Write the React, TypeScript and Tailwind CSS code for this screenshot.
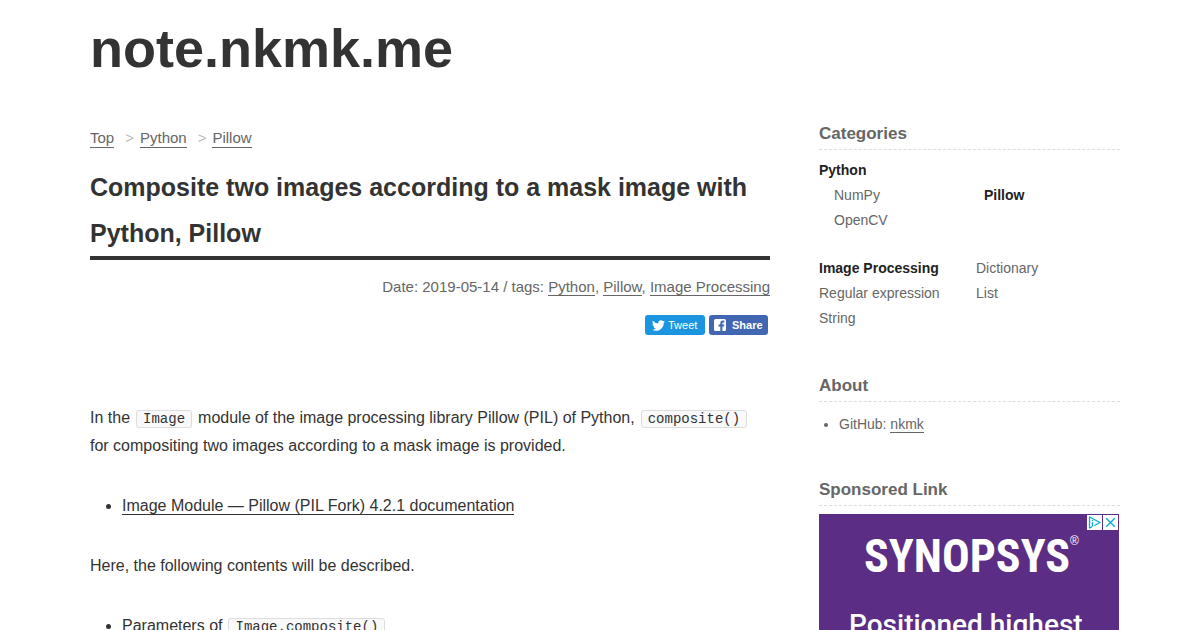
import React from "react";

const link = "border-b border-current";
const code =
  "mx-[6px] rounded-[3px] border border-[#dddddd] bg-[#f9f9f9] px-[6px] font-['Liberation_Mono',monospace] text-[14px] leading-[20px]";

const SideHeading = ({ children }: { children: React.ReactNode }) => (
  <h2 className="border-b border-dashed border-[#dddddd] pt-px pb-[3px] text-[17px] leading-[24px] font-bold">
    {children}
  </h2>
);

const Share = () => (
  <div className="mt-[14px] flex justify-end gap-1 pr-[2px] text-[11px] leading-[20px] text-white">
    <button type="button" className="flex h-5 w-[60px] items-center gap-[3px] rounded-[3px] bg-[#1b95e0] pl-[7px]">
      <svg width="13" height="13" viewBox="0 0 24 24" fill="currentColor" aria-hidden="true">
        <path d="M23.95 4.57a10 10 0 0 1-2.82.77 4.96 4.96 0 0 0 2.16-2.72 9.9 9.9 0 0 1-3.12 1.19 4.92 4.92 0 0 0-8.39 4.48A13.93 13.93 0 0 1 1.64 3.16a4.92 4.92 0 0 0 1.52 6.57 4.9 4.9 0 0 1-2.23-.61v.06a4.92 4.92 0 0 0 3.95 4.83 5 5 0 0 1-2.21.08 4.94 4.94 0 0 0 4.6 3.42A9.87 9.87 0 0 1 0 19.54a13.99 13.99 0 0 0 7.55 2.21c9.05 0 14-7.5 14-13.98 0-.21 0-.42-.02-.63a9.94 9.94 0 0 0 2.42-2.57z" />
      </svg>
      Tweet
    </button>
    <button type="button" className="flex h-5 w-[59px] items-center gap-[6px] rounded-[3px] bg-[#4267b2] pl-[5px] font-bold">
      <svg width="12" height="12" viewBox="0 0 16 16" aria-hidden="true">
        <rect width="16" height="16" rx="2" fill="#fff" />
        <path d="M11.2 16V10h2.2l.4-2.7h-2.6V5.9c0-.8.3-1.2 1.2-1.2h1.4V2.2c-.3 0-1.1-.1-2-.1-2 0-3.4 1.2-3.4 3.4v1.8H6V10h2.4v6z" fill="#4267b2" />
      </svg>
      Share
    </button>
  </div>
);

const Ad = () => (
  <div className="relative mt-2 h-[250px] w-[300px] bg-[#5c2d84] text-white">
    <div className="absolute top-px right-px flex gap-px">
      <a href="#" aria-label="Ad choices" className="bg-white">
        <svg width="15" height="15" viewBox="0 0 15 15" fill="none" stroke="#00aecd">
          <path d="M5 11.8 2.5 13V2l10.5 5.5-5.5 3" strokeWidth="1.3" strokeLinejoin="round" />
          <path d="M5.5 5v1M5.5 7v4.5" strokeWidth="1.3" />
        </svg>
      </a>
      <button type="button" aria-label="Close ad" className="bg-white">
        <svg width="15" height="15" viewBox="0 0 15 15" stroke="#00aecd" strokeWidth="1.3">
          <path d="m3.2 3.2 8.6 8.6M11.8 3.2l-8.6 8.6" />
        </svg>
      </button>
    </div>
    <svg width="300" height="80" viewBox="0 0 300 80" fill="currentColor" aria-label="Synopsys">
      <text x="45" y="58" fontSize="46" fontWeight="700" fontFamily="'Liberation Sans Narrow','Roboto Condensed','Liberation Sans',sans-serif">
        SYNOPSYS
      </text>
      <text x="251" y="31" fontSize="12" fontFamily="'Liberation Sans',sans-serif">®</text>
    </svg>
    <p className="pt-[14px] pl-[30px] font-['Roboto',sans-serif] text-[28px] leading-[34px] font-medium">
      Positioned highest
    </p>
  </div>
);

export default function App() {
  return (
    <div className="h-screen overflow-hidden bg-white pr-20 pl-[90px] font-['Liberation_Sans',Arial,sans-serif] text-[16px] leading-[28px] text-[#333333]">
      <header className="pt-[13px]">
        <h1 className="text-[54px] leading-[70px] font-bold">
          <a href="#">note.nkmk.me</a>
        </h1>
      </header>

      <div className="flex gap-[49px] pt-[38px]">
        <main className="min-w-0 flex-1">
          <nav className="mt-[3px] flex text-[15px] text-[#666666]">
            <a href="#" className="h-6 border-b border-current">Top</a>
            <span className="pr-[6px] pl-[11px] text-[#bbbbbb]">&gt;</span>
            <a href="#" className="h-6 border-b border-current">Python</a>
            <span className="pr-[6px] pl-[11px] text-[#bbbbbb]">&gt;</span>
            <a href="#" className="h-6 border-b border-current">Pillow</a>
          </nav>

          <h1 className="mt-3 border-b-4 border-[#333333] text-[25px] leading-[46px] font-bold">
            Composite two images according to a mask image with Python, Pillow
          </h1>

          <p className="mt-[13px] text-right text-[15px] text-[#666666]">
            Date: 2019-05-14 / tags: <a href="#" className={link}>Python</a>,{" "}
            <a href="#" className={link}>Pillow</a>,{" "}
            <a href="#" className={link}>Image Processing</a>
          </p>

          <Share />

          <p className="mt-[69px]">
            In the<code className={code}>Image</code>module of the image processing library Pillow (PIL) of Python,
            <code className={code}>composite()</code> for compositing two images according to a mask image is provided.
          </p>
          <ul className="mt-8 list-disc pl-8">
            <li>
              <a href="#" className={link}>Image Module — Pillow (PIL Fork) 4.2.1 documentation</a>
            </li>
          </ul>
          <p className="mt-8">Here, the following contents will be described.</p>
          <ul className="mt-8 list-disc pl-8">
            <li>
              Parameters of<code className={code}>Image.composite()</code>
            </li>
          </ul>
        </main>

        <aside className="w-[301px] shrink-0 text-[14px] leading-[25px] text-[#666666]">
          <SideHeading>Categories</SideHeading>
          <div className="mt-2">
            <a href="#" className="font-bold text-[#222222]">Python</a>
            <ul className="grid grid-cols-2 pl-[15px]">
              <li><a href="#">NumPy</a></li>
              <li className="pl-[7px]"><a href="#" className="font-bold text-[#222222]">Pillow</a></li>
              <li><a href="#">OpenCV</a></li>
            </ul>
          </div>
          <ul className="mt-[23px] grid grid-cols-[157px_1fr]">
            <li><a href="#" className="font-bold text-[#222222]">Image Processing</a></li>
            <li><a href="#">Dictionary</a></li>
            <li><a href="#">Regular expression</a></li>
            <li><a href="#">List</a></li>
            <li><a href="#">String</a></li>
          </ul>

          <div className="mt-[42px]">
            <SideHeading>About</SideHeading>
            <ul className="mt-[10px] list-disc pl-5">
              <li>GitHub: <a href="#" className={link}>nkmk</a></li>
            </ul>
          </div>

          <div className="mt-10">
            <SideHeading>Sponsored Link</SideHeading>
            <Ad />
          </div>
        </aside>
      </div>
    </div>
  );
}
